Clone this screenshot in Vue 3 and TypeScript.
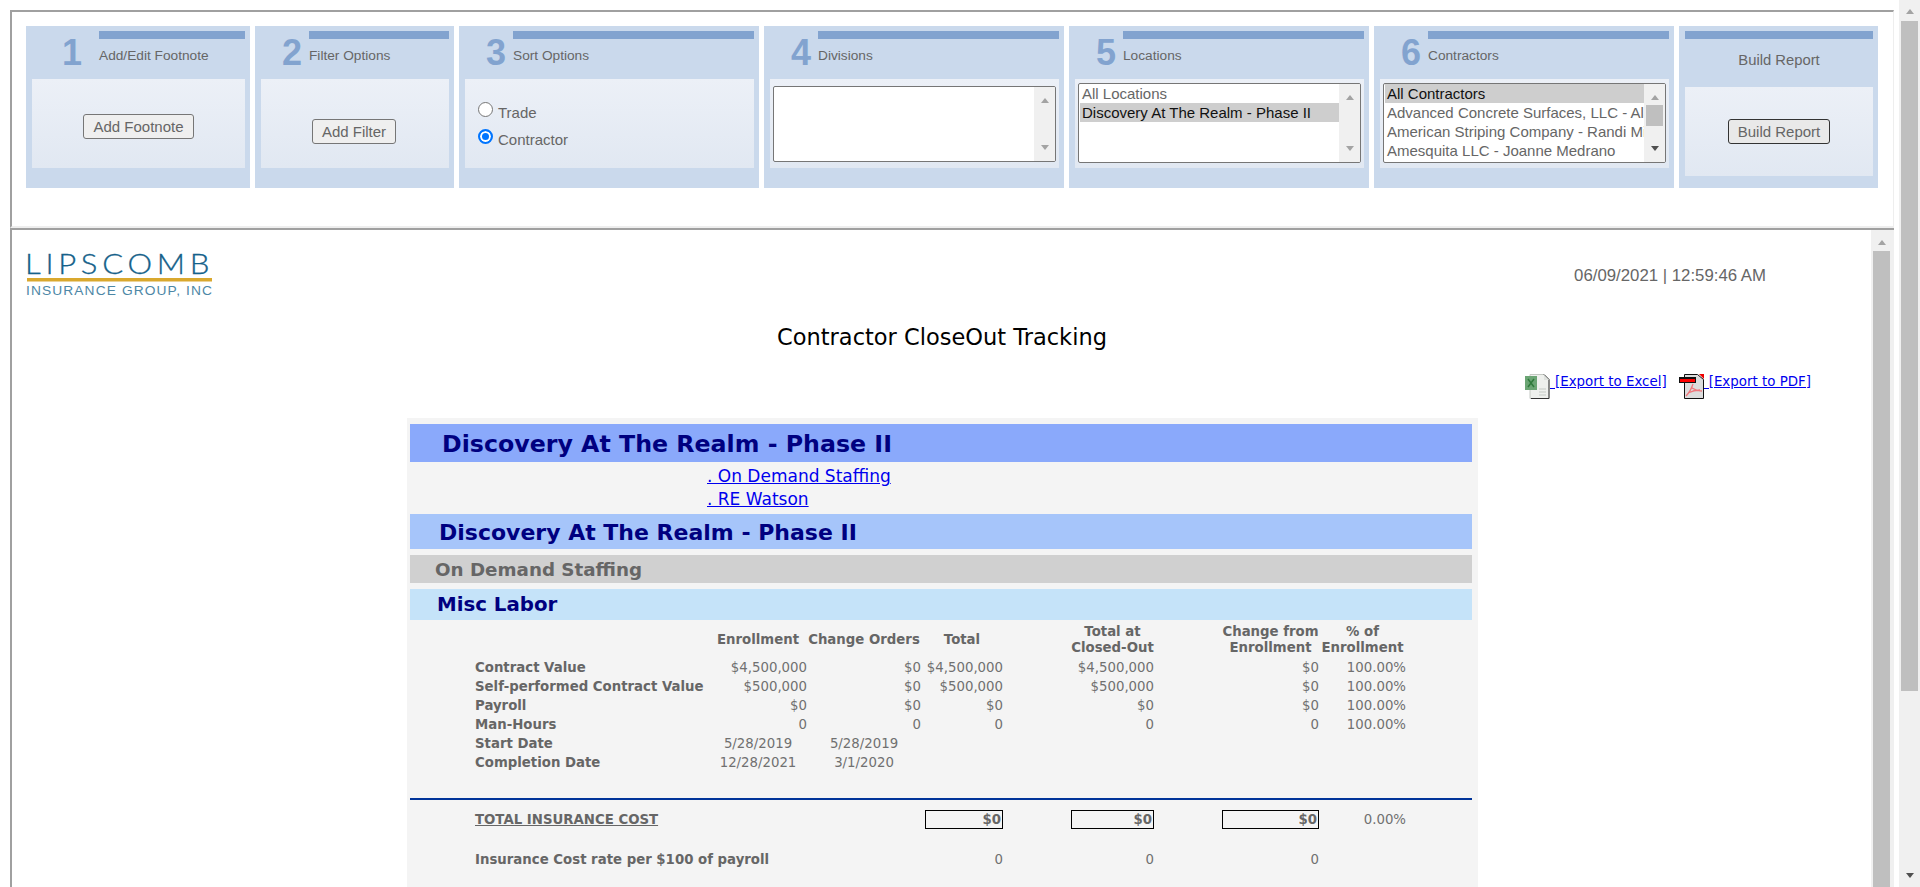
<template>
  <div class="page">
    <div class="main">
      <div class="top-frame">
        <div class="panels">
          <div v-for="p in panels" :key="p.num" class="panel">
            <div class="panel-head">
              <div class="num" :class="{ 'num-first': p.num === 1 }">{{ p.num }}</div>
              <div class="head-right">
                <div class="bar"></div>
                <div class="panel-label">{{ p.label }}</div>
              </div>
            </div>
            <div class="panel-body" :class="p.bodyClass">
              <button v-if="p.button" class="btn" :class="p.num === 1 ? 'btn-first' : 'btn-low'">{{ p.button }}</button>
              <div v-if="p.num === 3" class="radios">
                <label class="radio-row"><span class="radio"></span><span class="radio-text">Trade</span></label>
                <label class="radio-row"><span class="radio on"></span><span class="radio-text">Contractor</span></label>
              </div>
              <div v-if="p.items" class="listbox" :class="{ tall: p.num === 4 }">
                <div class="list-items">
                  <div v-for="it in p.items" :key="it" class="list-item" :class="{ sel: it === p.selected }">{{ it }}</div>
                </div>
                <div class="list-scroll" :class="{ active: p.num === 6 }">
                  <span class="arr up"></span>
                  <span v-if="p.num === 6" class="list-thumb"></span>
                  <span class="arr down"></span>
                </div>
              </div>
            </div>
          </div>
          <div class="panel panel-last">
            <div class="bar"></div>
            <div class="build-label">Build Report</div>
            <div class="panel-body">
              <button class="btn btn-build">Build Report</button>
            </div>
          </div>
        </div>
      </div>

      <div class="report-frame">
        <div class="report">
          <div class="report-top">
            <svg class="logo" width="190" height="44" viewBox="0 0 190 44">
              <text x="-1" y="19" class="logo-main" textLength="189" lengthAdjust="spacingAndGlyphs">LIPSCOMB</text>
              <rect x="1" y="23" width="185" height="3.500" fill="#d9a82e" />
              <text x="0" y="40" class="logo-sub" textLength="187" lengthAdjust="spacingAndGlyphs">INSURANCE GROUP, INC</text>
            </svg>
            <div class="stamp">06/09/2021 | 12:59:46 AM</div>
          </div>
          <h1 class="title">Contractor CloseOut Tracking</h1>
          <div class="exports">
            <a class="export" href="#">
              <svg width="25" height="25" viewBox="0 0 25 25">
                <path d="M5 .5h14l5 5v19H5z" fill="#eef0ed" stroke="#c5c9c4" />
                <path d="M19 .5l5 5M24 5.500v19H6" fill="none" stroke="#333" />
                <path d="M19 1v5h5" fill="#dfe2df" />
                <path d="M14 15h7M14 18h7M14 21h7" stroke="#c5cac5" />
                <rect x="0" y="2" width="12" height="14" fill="#6ba574" />
                <path d="M3 5l6 8M9 5l-6 8" stroke="#2f7a3b" stroke-width="1.500" />
              </svg><span class="gap"></span><span>[Export to Excel]</span>
            </a>
            <a class="export" href="#">
              <svg width="25" height="25" viewBox="0 0 25 25">
                <path d="M5.500.5h13l6 5v19h-19z" fill="#dcdcdc" stroke="#111" />
                <path d="M20 0h5v5z" fill="#e00" />
                <rect x="0" y="3" width="17" height="6" fill="#111" />
                <rect x="1" y="5" width="15" height="3" fill="#f00" />
                <path d="M14 10c-2 6-5 10-7 12M13 14c3 2 7 3 10 3M9 19c4-2 8-3 12-3" fill="none" stroke="#f0757a" stroke-width="1.300" />
              </svg><span class="gap"></span><span>[Export to PDF]</span>
            </a>
          </div>

          <div class="sheet">
            <div class="band band-1">Discovery At The Realm - Phase II</div>
            <div class="links">
              <a href="#">. On Demand Staffing</a>
              <a href="#">. RE Watson</a>
            </div>
            <div class="band band-2">Discovery At The Realm - Phase II</div>
            <div class="band band-3">On Demand Staffing</div>
            <div class="band band-4">Misc Labor</div>

            <table class="grid">
              <colgroup>
                <col v-for="(w, i) in colWidths" :key="i" :style="{ width: w + 'px' }" />
              </colgroup>
              <thead>
                <tr>
                  <th></th>
                  <th>Enrollment</th>
                  <th>Change Orders</th>
                  <th>Total</th>
                  <th></th>
                  <th>Total at<br />Closed-Out</th>
                  <th></th>
                  <th>Change from<br />Enrollment</th>
                  <th>% of<br />Enrollment</th>
                </tr>
              </thead>
              <tbody>
                <tr v-for="r in rows" :key="r.label">
                  <td class="row-label">{{ r.label }}</td>
                  <td>{{ r.enroll }}</td>
                  <td>{{ r.change }}</td>
                  <td>{{ r.total }}</td>
                  <td></td>
                  <td>{{ r.closed }}</td>
                  <td></td>
                  <td>{{ r.diff }}</td>
                  <td>{{ r.pct }}</td>
                </tr>
                <tr>
                  <td class="row-label">Start Date</td>
                  <td class="mid">5/28/2019</td>
                  <td class="mid">5/28/2019</td>
                  <td colspan="6"></td>
                </tr>
                <tr>
                  <td class="row-label">Completion Date</td>
                  <td class="mid">12/28/2021</td>
                  <td class="mid">3/1/2020</td>
                  <td colspan="6"></td>
                </tr>
              </tbody>
            </table>

            <div class="rule"></div>

            <table class="grid totals">
              <colgroup>
                <col v-for="(w, i) in colWidths" :key="i" :style="{ width: w + 'px' }" />
              </colgroup>
              <tbody>
                <tr class="total-row">
                  <td class="row-label total-label">TOTAL INSURANCE COST</td>
                  <td></td>
                  <td></td>
                  <td><div class="box box-first">$0</div></td>
                  <td></td>
                  <td><div class="box">$0</div></td>
                  <td></td>
                  <td><div class="box">$0</div></td>
                  <td>0.00%</td>
                </tr>
                <tr class="rate-row">
                  <td class="row-label" colspan="3">Insurance Cost rate per $100 of payroll</td>
                  <td>0</td>
                  <td></td>
                  <td>0</td>
                  <td></td>
                  <td>0</td>
                  <td></td>
                </tr>
              </tbody>
            </table>
          </div>
        </div>
        <div class="inner-scroll">
          <span class="arr up"></span>
          <div class="inner-thumb"></div>
        </div>
      </div>
    </div>
    <div class="page-scroll">
      <span class="arr up"></span>
      <div class="page-thumb"></div>
      <span class="arr down dark"></span>
    </div>
  </div>
</template>

<script setup lang="ts">
interface Panel {
  num: number
  label: string
  bodyClass?: string
  button?: string
  items?: string[]
  selected?: string
}

const panels: Panel[] = [
  { num: 1, label: 'Add/Edit Footnote', button: 'Add Footnote' },
  { num: 2, label: 'Filter Options', button: 'Add Filter' },
  { num: 3, label: 'Sort Options', bodyClass: 'body-left' },
  { num: 4, label: 'Divisions', bodyClass: 'body-list', items: [] },
  {
    num: 5,
    label: 'Locations',
    bodyClass: 'body-list',
    items: ['All Locations', 'Discovery At The Realm - Phase II'],
    selected: 'Discovery At The Realm - Phase II'
  },
  {
    num: 6,
    label: 'Contractors',
    bodyClass: 'body-list',
    items: [
      'All Contractors',
      'Advanced Concrete Surfaces, LLC - Alan Fisher',
      'American Striping Company - Randi Miller',
      'Amesquita LLC - Joanne Medrano'
    ],
    selected: 'All Contractors'
  }
]

const colWidths = [234, 98, 114, 82, 68, 83, 68, 97, 87]

const rows = [
  { label: 'Contract Value', enroll: '$4,500,000', change: '$0', total: '$4,500,000', closed: '$4,500,000', diff: '$0', pct: '100.00%' },
  { label: 'Self-performed Contract Value', enroll: '$500,000', change: '$0', total: '$500,000', closed: '$500,000', diff: '$0', pct: '100.00%' },
  { label: 'Payroll', enroll: '$0', change: '$0', total: '$0', closed: '$0', diff: '$0', pct: '100.00%' },
  { label: 'Man-Hours', enroll: '0', change: '0', total: '0', closed: '0', diff: '0', pct: '100.00%' }
]
</script>

<style>
html,
body {
  margin: 0;
  height: 887px;
  overflow: hidden;
  background: #fff;
}
</style>

<style scoped>
.page {
  display: flex;
  height: 887px;
  overflow: hidden;
  font-family: "Liberation Sans", Arial, sans-serif;
}

.main {
  width: 1894px;
  padding: 10px 0 0 10px;
  box-sizing: border-box;
  display: flex;
  flex-direction: column;
  height: 887px;
  flex: none;
}

.top-frame {
  height: 218px;
  box-sizing: border-box;
  border-top: 2px solid #a0a0a0;
  border-left: 2px solid #a0a0a0;
  border-right: 1px solid #eee;
  border-bottom: 2px solid #eee;
  padding: 14px 0 0 14px;
  flex: none;
}

.panels {
  display: grid;
  grid-template-columns: 224px 199px 300px 300px 300px 300px 199px;
  column-gap: 5px;
}

.panel {
  height: 162px;
  background: #cad9ec;
  padding: 5px 5px 0 6px;
  box-sizing: border-box;
}

.panel-head {
  display: flex;
  height: 48px;
}

.num {
  width: 48px;
  font-size: 36px;
  font-weight: bold;
  color: #82a3cf;
  text-align: right;
  line-height: 34px;
  padding: 5px 7px 0 0;
  box-sizing: border-box;
  flex: none;
}

.num-first {
  width: 67px;
  padding-right: 17px;
}

.head-right {
  flex: 1;
}

.bar {
  height: 8px;
  background: #82a3cf;
}

.panel-label {
  font-size: 13.700px;
  color: #666;
  margin-top: 9px;
  line-height: 16px;
}

.panel-body {
  height: 89px;
  box-sizing: border-box;
  background: linear-gradient(#ecf0f7, #e1e8f2);
  display: flex;
  align-items: center;
  justify-content: center;
}

.btn {
  font-family: "Liberation Sans", Arial, sans-serif;
  font-size: 15px;
  color: #666;
  background: #efefef;
  border: 1px solid #767676;
  border-radius: 3px;
  height: 25px;
  padding: 0 9px;
}

.btn-first {
  margin-top: 6px;
}

.btn-low {
  margin: 16px 2px 0 0;
}

.body-left {
  justify-content: flex-start;
  align-items: flex-start;
  padding: 23px 0 0 13px;
}

.radio-row {
  display: flex;
  align-items: flex-start;
  font-size: 15px;
  line-height: 16px;
  color: #666;
  gap: 5px;
  height: 27px;
}

.radio-text {
  margin-top: 3px;
}

.radio {
  width: 15px;
  height: 15px;
  border: 1px solid #767676;
  border-radius: 50%;
  background: #fff;
  box-sizing: border-box;
  flex: none;
}

.radio.on {
  border: 2px solid #0075ff;
  box-shadow: inset 0 0 0 2px #fff;
  background: #0075ff;
}

.body-list {
  align-items: flex-start;
  padding: 4px 3px 0;
}

.listbox {
  display: flex;
  width: 100%;
  height: 80px;
  box-sizing: border-box;
  background: #fff;
  border: 1px solid #767676;
  border-radius: 2px;
  overflow: hidden;
}

.listbox.tall {
  height: 76px;
  margin-top: 3px;
}

.list-items {
  flex: 1;
  min-width: 0;
  padding-left: 1px;
}

.list-item {
  font-size: 15px;
  line-height: 19px;
  height: 19px;
  color: #666;
  padding-left: 2px;
  white-space: nowrap;
  overflow: hidden;
}

.list-item.sel {
  background: #cecece;
  color: #111;
}

.list-scroll {
  position: relative;
  width: 21px;
  flex: none;
  background: #f0f0f0;
  display: flex;
  flex-direction: column;
  align-items: center;
  justify-content: space-between;
  padding: 11px 0 11px;
  box-sizing: border-box;
}

.list-thumb {
  position: absolute;
  left: 2px;
  top: 21px;
  width: 17px;
  height: 21px;
  background: #bfbfbf;
}

.list-scroll.active .down {
  border-top-color: #505050;
}

.arr {
  display: block;
  width: 0;
  height: 0;
  border-left: 4.500px solid transparent;
  border-right: 4.500px solid transparent;
  flex: none;
}

.arr.up {
  border-bottom: 5px solid #a3a3a3;
}

.arr.down {
  border-top: 5px solid #a3a3a3;
}

.arr.dark {
  border-top-color: #505050;
}

.build-label {
  height: 48px;
  line-height: 42px;
  text-align: center;
  font-size: 14.800px;
  color: #666;
}

.btn-build {
  border-color: #333;
  background: #e9e9e9;
}

.report-frame {
  flex: 1;
  min-height: 0;
  display: flex;
  box-sizing: border-box;
  border-top: 2px solid #a0a0a0;
  border-left: 2px solid #a0a0a0;
}

.report {
  flex: 1;
  min-width: 0;
  overflow: hidden;
  font-family: "DejaVu Sans", Verdana, sans-serif;
}

.report-top {
  height: 95px;
  display: flex;
  justify-content: space-between;
  box-sizing: border-box;
  padding: 25px 105px 0 14px;
}

.logo {
  display: block;
  overflow: visible;
}

.logo-main {
  font-family: Lato, "Liberation Sans", sans-serif;
  font-weight: 300;
  font-size: 26.500px;
  letter-spacing: 4px;
  fill: #15618a;
  stroke: #15618a;
  stroke-width: 0.300px;
}

.logo-sub {
  font-family: "Liberation Sans", Arial, sans-serif;
  font-size: 12.500px;
  letter-spacing: 1px;
  fill: #4d87a6;
}

.stamp {
  font-family: "Liberation Sans", Arial, sans-serif;
  font-size: 16.800px;
  color: #666;
  line-height: 18px;
  margin-top: 12px;
}

.title {
  margin: 0;
  font-size: 22.500px;
  font-weight: normal;
  color: #000;
  text-align: center;
  line-height: 24px;
  height: 24px;
  width: 1860px;
}

.exports {
  display: flex;
  justify-content: flex-end;
  gap: 12px;
  height: 25px;
  margin-top: 25px;
  padding-right: 60px;
}

.export {
  display: flex;
  align-items: flex-start;
  font-size: 13.400px;
  line-height: 15px;
  color: #00e;
  text-decoration: underline;
}

.gap {
  width: 5px;
  height: 14px;
  border-bottom: 1px solid #00e;
}

.sheet {
  width: 1071px;
  margin: 19px 0 0 395px;
  padding: 6px 6px 0 3px;
  box-sizing: border-box;
  background: #f4f4f4;
  height: 560px;
}

.band {
  font-weight: bold;
  display: flex;
  align-items: center;
  color: #000080;
  box-sizing: border-box;
}

.band-1 {
  height: 38px;
  background: #8aa9fb;
  font-size: 23.700px;
  padding: 2px 0 0 32px;
}

.band-2 {
  height: 35px;
  background: #a6c5fa;
  font-size: 22px;
  padding: 2px 0 0 29px;
}

.band-3 {
  height: 28px;
  margin-top: 6px;
  background: #d0d0d0;
  font-size: 18.300px;
  color: #666;
  padding-left: 25px;
}

.band-4 {
  height: 31px;
  margin-top: 6px;
  background: #c5e3f9;
  font-size: 19.800px;
  padding-left: 27px;
}

.links {
  height: 52px;
  padding: 3px 0 0 297px;
  box-sizing: border-box;
  display: flex;
  flex-direction: column;
  align-items: flex-start;
  font-size: 17px;
  line-height: 23px;
}

.links a {
  color: #00e;
}

.grid {
  table-layout: fixed;
  border-collapse: collapse;
  margin: 4px 0 0 65px;
  width: 931px;
  font-size: 13.300px;
  color: #707070;
}

.grid th {
  font-weight: bold;
  color: #666;
  text-align: center;
  vertical-align: middle;
  padding: 0 0 2px;
  line-height: 16px;
  white-space: nowrap;
}

.grid td {
  height: 19px;
  padding: 0;
  text-align: right;
  white-space: nowrap;
}

.grid td.mid {
  text-align: center;
}

.grid td.row-label {
  text-align: left;
  font-weight: bold;
  color: #666;
}

.rule {
  height: 2px;
  margin-top: 26px;
  background: #003399;
}

.totals {
  margin-top: 10px;
}

.grid td.total-label {
  text-decoration: underline;
}

.box {
  height: 19px;
  box-sizing: border-box;
  border: 1px solid #000;
  font-weight: bold;
  color: #666;
  line-height: 17px;
  padding-right: 1px;
}

.box-first {
  margin-left: 4px;
}

.rate-row td {
  padding-top: 21px;
}

.inner-scroll {
  width: 23px;
  flex: none;
  background: #f0f0f0;
  display: flex;
  flex-direction: column;
  align-items: center;
  padding: 10px 2px 0 0;
  box-sizing: border-box;
}

.inner-thumb {
  width: 17px;
  flex: 1;
  margin-top: 6px;
  background: #bfbfbf;
}

.page-scroll {
  margin-left: 5px;
  width: 21px;
  flex: none;
  background: #f0f0f0;
  display: flex;
  flex-direction: column;
  align-items: center;
  padding-top: 9px;
  box-sizing: border-box;
}

.page-thumb {
  width: 17px;
  margin-top: 7px;
  height: 670px;
  flex: none;
  background: #bfbfbf;
}

.page-scroll .down {
  margin-top: auto;
  margin-bottom: 9px;
}
</style>
